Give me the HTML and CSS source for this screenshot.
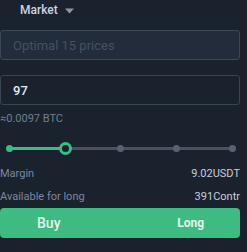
FILE: index.html
```html
<!DOCTYPE html>
<html>
<head>
<meta charset="utf-8">
<link rel="stylesheet" href="styles.css">
</head>
<body>
<div class="panel">
  <div class="type-row">
    <span class="type-label">Market</span>
    <svg class="caret" width="9" height="6" viewBox="0 0 9 6"><path d="M0 0.5 H9 L4.5 5.5 Z" fill="#8e97a5"/></svg>
  </div>
  <div class="field field-disabled"><span class="placeholder">Optimal 15 prices</span></div>
  <div class="field field-qty"><span class="qty">97</span></div>
  <div class="approx">≈0.0097 BTC</div>
  <div class="slider">
    <div class="track"></div>
    <div class="track-fill"></div>
    <span class="stop stop-on" style="left:9px"></span>
    <span class="stop" style="left:120px"></span>
    <span class="stop" style="left:176px"></span>
    <span class="stop" style="left:232px"></span>
    <span class="thumb" style="left:65px"></span>
  </div>
  <div class="info-row first"><span class="k">Margin</span><span class="v">9.02USDT</span></div>
  <div class="info-row"><span class="k">Available for long</span><span class="v">391Contr</span></div>
  <div class="buy" role="button"><span class="buy-main">Buy</span><span class="buy-side">Long</span></div>
</div>
</body>
</html>
```
FILE: styles.css
```css
html, body {
  margin: 0;
  padding: 0;
  background: #1a222d;
}
body {
  width: 247px;
  height: 252px;
  overflow: hidden;
  font-family: Roboto, "Liberation Sans", sans-serif;
}
.panel {
  width: 240px;
  display: flex;
  flex-direction: column;
}
.type-row {
  height: 20px;
  display: flex;
  align-items: center;
  padding-left: 20px;
  gap: 7px;
}
.type-label {
  color: #cdd4e0;
  font-size: 12px;
  font-weight: 500;
}
.caret { margin-top: 1px; }
.field {
  box-sizing: border-box;
  height: 30px;
  border-radius: 3px;
  display: flex;
  align-items: center;
  padding-left: 12px;
}
.field-disabled {
  margin-top: 10px;
  background: #222c3a;
  border: 1px solid #3c4858;
}
.placeholder {
  color: #465163;
  font-size: 13px;
}
.field-qty {
  margin-top: 15px;
  border: 1px solid #3a4452;
}
.qty {
  color: #e2e8f7;
  font-size: 13px;
  font-weight: 500;
}
.approx {
  margin-top: 7px;
  color: #737e8d;
  font-size: 11px;
  line-height: 13px;
}
.slider {
  position: relative;
  height: 14px;
  margin-top: 16px;
}
.track {
  position: absolute;
  left: 9px;
  width: 223px;
  top: 6px;
  height: 3px;
  background: #4a5262;
}
.track-fill {
  position: absolute;
  left: 9px;
  width: 56px;
  top: 6px;
  height: 3px;
  background: #3dbb82;
}
.stop {
  position: absolute;
  top: 4px;
  width: 7px;
  height: 7px;
  margin-left: -3.5px;
  border-radius: 50%;
  background: #5a6272;
}
.stop-on { background: #3dbb82; }
.thumb {
  position: absolute;
  top: 1px;
  width: 13px;
  height: 13px;
  margin-left: -6.5px;
  box-sizing: border-box;
  border: 3px solid #3dbb82;
  border-radius: 50%;
  background: #1a222d;
}
.info-row {
  display: flex;
  justify-content: space-between;
  font-size: 11px;
  line-height: 13px;
  margin-top: 10px;
}
.info-row.first { margin-top: 12px; }
.k { color: #7d87a0; }
.v { color: #c7cfdb; }
.buy {
  margin-top: 5px;
  height: 30px;
  border-radius: 4px;
  background: #3dbb82;
  display: flex;
  align-items: center;
  justify-content: space-between;
  padding: 0 36px 0 37px;
  color: #e4f5ec;
  font-weight: 500;
}
.buy-main { font-size: 14px; }
.buy-side { font-size: 12px; font-weight: 700; }
```
